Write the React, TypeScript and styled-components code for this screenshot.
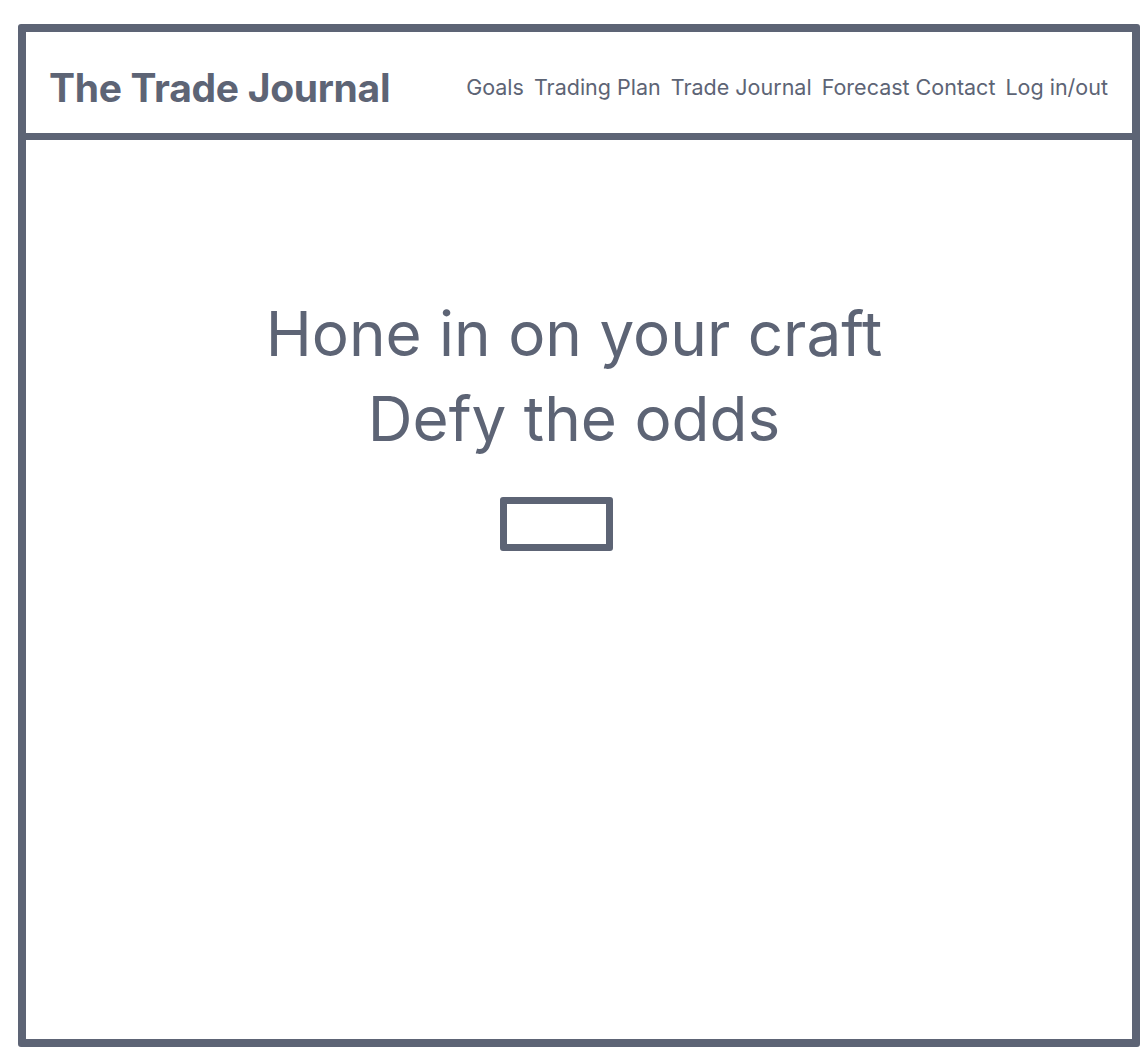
import React from "react";
import styled, { createGlobalStyle } from "styled-components";

const Global = createGlobalStyle`
  html, body { margin: 0; padding: 0; background: #ffffff; }
  body { font-family: Inter, "Noto Sans", sans-serif; color: #5d6475; }
`;

const INK = "#5d6475";

const Frame = styled.div`
  box-sizing: border-box;
  margin: 24px 0 0 18px;
  width: 1122px;
  height: 1023px;
  border: 8px solid ${INK};
  border-radius: 3px;
  display: flex;
  flex-direction: column;
`;

const Header = styled.header`
  box-sizing: border-box;
  height: 108px;
  border-bottom: 7px solid ${INK};
  display: flex;
  align-items: center;
  justify-content: space-between;
  padding: 9px 24px 0 23px;
`;

const Brand = styled.h1`
  margin: 0;
  font-size: 39px;
  font-weight: 700;
  letter-spacing: -0.3px;
  color: ${INK};
`;

const Nav = styled.nav`
  display: flex;
  align-items: center;
  gap: 10px;
`;

const NavLink = styled.a<{ $tight?: boolean }>`
  font-size: 21.5px;
  font-weight: 400;
  color: ${INK};
  text-decoration: none;
  margin-right: ${(p) => (p.$tight ? "-4px" : "0")};
`;

const Main = styled.main`
  flex: 1;
  display: flex;
  flex-direction: column;
  align-items: center;
  padding-top: 151px;
`;

const Headline = styled.h2`
  margin: 0;
  padding-right: 10px;
  font-size: 62px;
  font-weight: 400;
  line-height: 85px;
  text-align: center;
  color: ${INK};
`;

const CtaButton = styled.button`
  box-sizing: border-box;
  margin-top: 36px;
  margin-right: 46px;
  width: 113px;
  height: 54px;
  border: 7px solid ${INK};
  border-radius: 3px;
  background: #ffffff;
`;

export default function App() {
  return (
    <>
      <Global />
      <Frame>
        <Header>
          <Brand>The Trade Journal</Brand>
          <Nav>
            <NavLink>Goals</NavLink>
            <NavLink>Trading Plan</NavLink>
            <NavLink>Trade Journal</NavLink>
            <NavLink $tight>Forecast</NavLink>
            <NavLink>Contact</NavLink>
            <NavLink>Log in/out</NavLink>
          </Nav>
        </Header>
        <Main>
          <Headline>
            Hone in on your craft
            <br />
            Defy the odds
          </Headline>
          <CtaButton aria-label="Get started" />
        </Main>
      </Frame>
    </>
  );
}
